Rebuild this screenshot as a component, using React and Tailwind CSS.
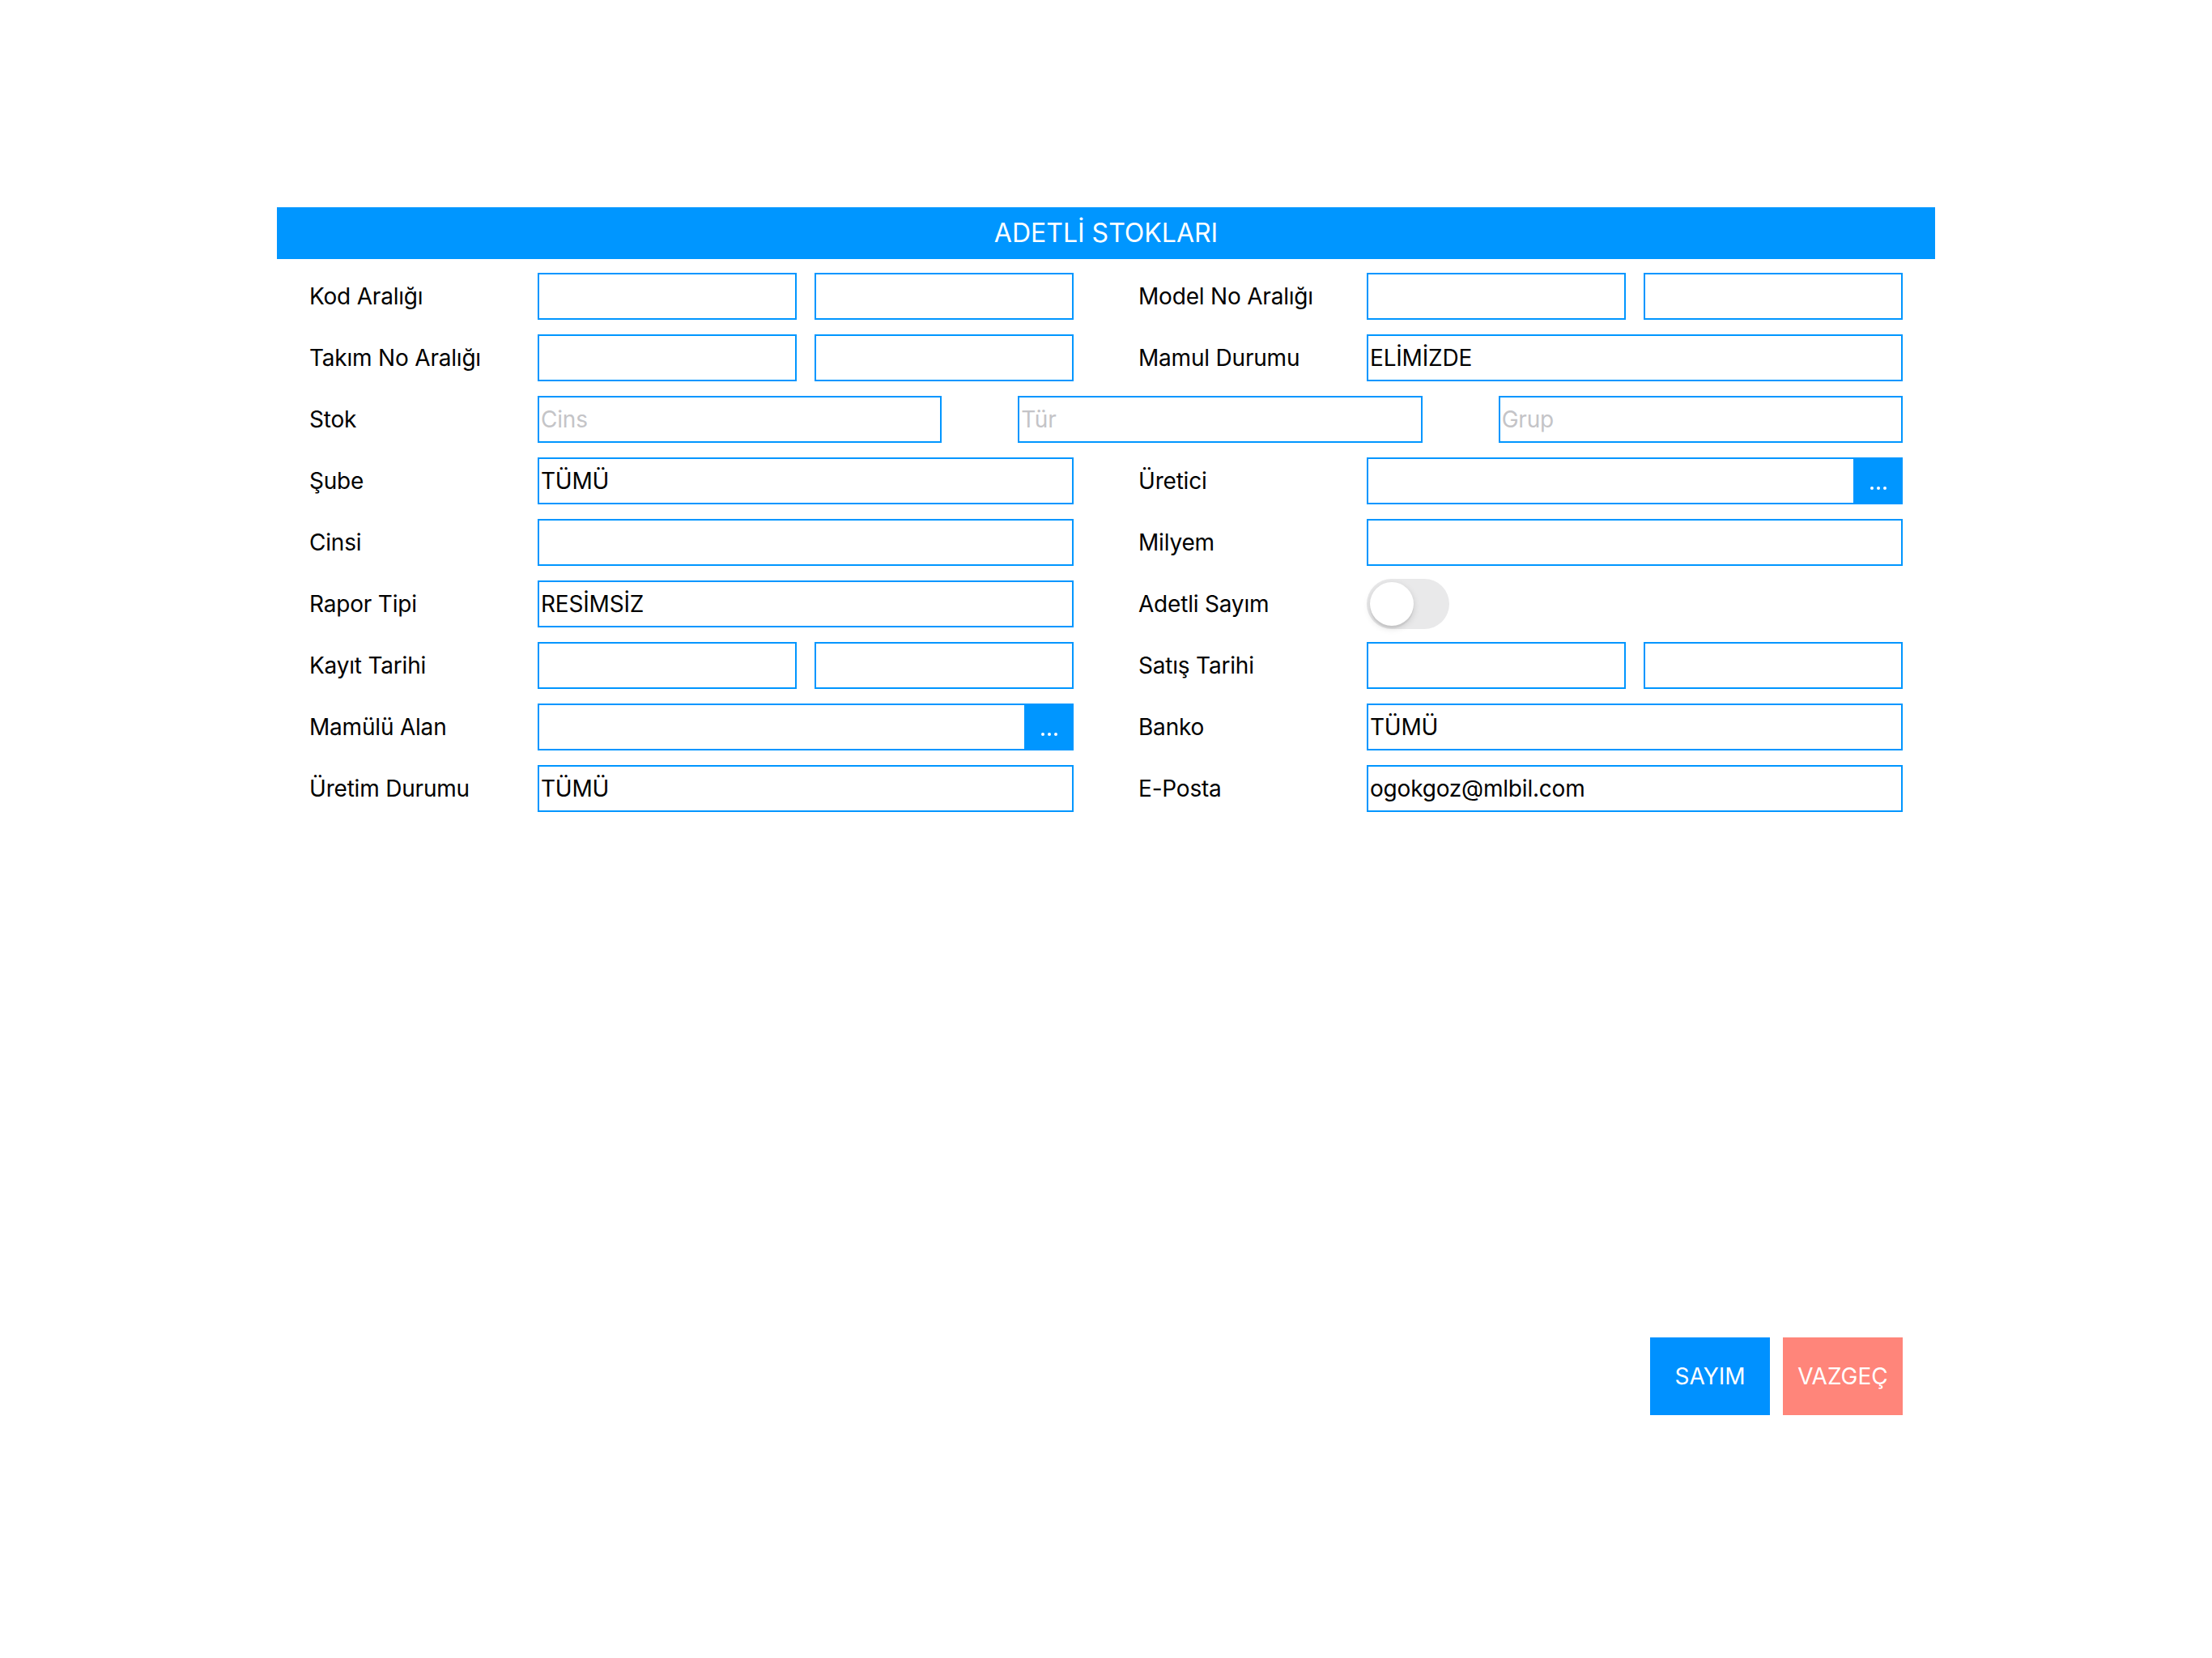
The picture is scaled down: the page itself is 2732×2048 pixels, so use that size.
import React, { useState } from 'react';

const BLUE = 'border-[#0096ff]';

// Single bordered text field, optional "..." picker button on the right
const Field = ({ value = '', placeholder = '', picker = false }) => (
  <div className={`flex-1 basis-0 min-w-0 h-[58px] flex border-2 ${BLUE} bg-white`}>
    <input
      type="text"
      readOnly
      size={1}
      defaultValue={value}
      placeholder={placeholder}
      className="flex-1 w-0 min-w-0 h-full pl-[2px] bg-transparent outline-none text-[28px] tracking-[-0.2px] text-black placeholder:text-[#c4c4c7] font-['Inter',sans-serif]"
    />
    {picker && (
      <button
        type="button"
        className="w-[61px] -my-[2px] -mr-[2px] shrink-0 bg-[#0096ff] flex items-center justify-center gap-[4px] pt-[18px]"
      >
        <span className="w-[4px] h-[4px] rounded-full bg-white" />
        <span className="w-[4px] h-[4px] rounded-full bg-white" />
        <span className="w-[4px] h-[4px] rounded-full bg-white" />
      </button>
    )}
  </div>
);

const Label = ({ children }) => (
  <div className="w-[282px] shrink-0 text-[28px] tracking-[-0.2px] text-black leading-none">{children}</div>
);

// Half of a row: label + one or two fields (or custom content)
const Half = ({ label, children }) => (
  <div className="flex-1 basis-0 min-w-0 flex items-center">
    <Label>{label}</Label>
    <div className="flex-1 min-w-0 flex items-center gap-[22px]">{children}</div>
  </div>
);

const Row = ({ children }) => (
  <div className="h-[58px] flex items-center gap-[80px]">{children}</div>
);

const Toggle = () => {
  const [on, setOn] = useState(false);
  return (
    <button
      type="button"
      onClick={() => setOn(!on)}
      className={`w-[102px] h-[62px] shrink-0 rounded-full p-[4px] flex items-center transition-colors ${on ? 'bg-[#34c759] justify-end' : 'bg-[#e9e9ea] justify-start'}`}
    >
      <span className="w-[54px] h-[54px] rounded-full bg-white shadow-[0_3px_8px_rgba(0,0,0,0.15),0_3px_1px_rgba(0,0,0,0.06)]" />
    </button>
  );
};

export default function App() {
  return (
    <div className="w-full min-h-[2048px] bg-white font-['Inter',sans-serif]">
      <div className="w-[2048px] mx-auto pt-[256px]">
        <div className="h-[64px] bg-[#0096ff] flex items-center justify-center text-white text-[32px]">
          ADETLİ STOKLARI
        </div>

        <div className="px-[40px] pt-[17px]">
          <div className="flex flex-col gap-[18px]">
            <Row>
              <Half label="Kod Aralığı"><Field /><Field /></Half>
              <Half label="Model No Aralığı"><Field /><Field /></Half>
            </Row>

            <Row>
              <Half label="Takım No Aralığı"><Field /><Field /></Half>
              <Half label="Mamul Durumu"><Field value="ELİMİZDE" /></Half>
            </Row>

            <div className="h-[58px] flex items-center">
              <Label>Stok</Label>
              <div className="flex-1 min-w-0 flex gap-[94px]">
                <Field placeholder="Cins" />
                <Field placeholder="Tür" />
                <Field placeholder="Grup" />
              </div>
            </div>

            <Row>
              <Half label="Şube"><Field value="TÜMÜ" /></Half>
              <Half label="Üretici"><Field picker /></Half>
            </Row>

            <Row>
              <Half label="Cinsi"><Field /></Half>
              <Half label="Milyem"><Field /></Half>
            </Row>

            <Row>
              <Half label="Rapor Tipi"><Field value="RESİMSİZ" /></Half>
              <Half label="Adetli Sayım"><Toggle /></Half>
            </Row>

            <Row>
              <Half label="Kayıt Tarihi"><Field /><Field /></Half>
              <Half label="Satış Tarihi"><Field /><Field /></Half>
            </Row>

            <Row>
              <Half label="Mamülü Alan"><Field picker /></Half>
              <Half label="Banko"><Field value="TÜMÜ" /></Half>
            </Row>

            <Row>
              <Half label="Üretim Durumu"><Field value="TÜMÜ" /></Half>
              <Half label="E-Posta"><Field value="ogokgoz@mlbil.com" /></Half>
            </Row>
          </div>

          <div className="mt-[649px] flex justify-end gap-[16px]">
            <button type="button" className="w-[148px] h-[96px] bg-[#0091ff] text-white text-[28px]">
              SAYIM
            </button>
            <button type="button" className="w-[148px] h-[96px] bg-[#ff857a] text-white text-[28px]">
              VAZGEÇ
            </button>
          </div>
        </div>
      </div>
    </div>
  );
}
